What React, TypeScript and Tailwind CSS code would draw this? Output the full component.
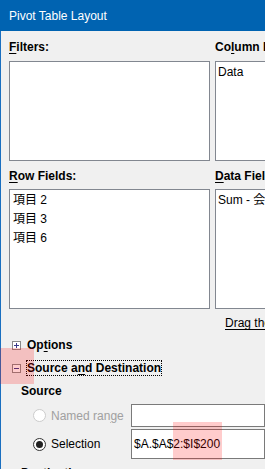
import React from "react";

const font = { fontFamily: '"Liberation Sans", "Noto Sans CJK JP", sans-serif' };

function Label({ children }: { children: React.ReactNode }) {
  return <div className="h-[20px] leading-[20px] text-[12px] font-bold text-black whitespace-nowrap">{children}</div>;
}

export default function App() {
  return (
    <div className="relative w-[265px] h-[469px] overflow-hidden bg-[#f0f0f0] text-[12px] text-black" style={font}>
      <div className="h-[31px] bg-[#0063b1] text-white flex items-center pl-[9px] text-[12px] leading-none">
        Pivot Table Layout
      </div>
      <div className="border-l border-[#1a6fc0] h-[438px] pl-[8px]">
        <div className="grid grid-cols-[201px_200px] gap-x-[5px] pt-[6px]">
          <div>
            <Label>
              <span className="underline underline-offset-2">F</span>ilters:
            </Label>
            <div className="mt-[4px] h-[100px] bg-white border border-[#828790]" />
          </div>
          <div>
            <Label>
              Co<span className="underline underline-offset-2">l</span>umn Fields:
            </Label>
            <div className="mt-[4px] h-[100px] bg-white border border-[#828790] pl-[2px] leading-[20px]">Data</div>
          </div>
          <div className="mt-[5px]">
            <Label>
              <span className="underline underline-offset-2">R</span>ow Fields:
            </Label>
            <div className="mt-[3px] h-[120px] bg-white border border-[#828790] pl-[3px] pt-[1px] leading-[19px]">
              <div>項目 2</div>
              <div>項目 3</div>
              <div>項目 6</div>
            </div>
          </div>
          <div className="mt-[5px]">
            <Label>
              <span className="underline underline-offset-2">D</span>ata Fields:
            </Label>
            <div className="mt-[3px] h-[120px] bg-white border border-[#828790] pl-[2px] pt-[1px] leading-[19px] whitespace-nowrap">
              Sum - 会計
            </div>
          </div>
          <div />
          <div className="mt-[5px] pl-[10px] h-[18px] leading-[18px] underline underline-offset-2 whitespace-nowrap">
            Drag the Items into the desired position
          </div>
        </div>

        <div className="mt-[4px] pl-[3px] flex flex-col gap-[5px]">
          <div className="flex items-center h-[18px]">
            <div className="w-[9px] h-[9px] border border-[#8a8a8a] bg-white flex items-center justify-center relative">
              <div className="absolute w-[5px] h-[1px] bg-[#3a3a8a]" />
              <div className="absolute w-[1px] h-[5px] bg-[#3a3a8a]" />
            </div>
            <span className="ml-[6px] font-bold text-[12px]">
              Op<span className="underline underline-offset-2">t</span>ions
            </span>
          </div>
          <div className="flex items-center h-[18px]">
            <div className="w-[9px] h-[9px] border border-[#8a8a8a] bg-white flex items-center justify-center relative">
              <div className="absolute w-[5px] h-[1px] bg-[#3a3a8a]" />
            </div>
            <span className="ml-[5px] font-bold text-[12px] border border-dotted border-black px-[0px] leading-[14px]">
              Source a<span className="underline underline-offset-2">n</span>d Destination
            </span>
          </div>
        </div>

        <div className="pl-[12px] mt-[4px]">
          <Label>Source</Label>
          <div className="flex items-center mt-[3px] h-[23px]">
            <div className="w-[13px] h-[13px] rounded-full border border-[#cccccc] bg-white ml-[12px]" />
            <span className="ml-[5px] w-[80px] text-[#a0a0a0] whitespace-nowrap">
              Named ran<span className="underline underline-offset-2">g</span>e
            </span>
            <div className="h-[23px] flex-1 bg-white border border-[#7a7a7a]" />
          </div>
          <div className="flex items-center mt-[2px] h-[30px]">
            <div className="w-[13px] h-[13px] rounded-full border border-[#333333] bg-white ml-[12px] flex items-center justify-center">
              <div className="w-[7px] h-[7px] rounded-full bg-[#222222]" />
            </div>
            <span className="ml-[5px] w-[80px] whitespace-nowrap">Selection</span>
            <div className="h-[30px] flex-1 bg-white border border-[#7a7a7a] flex items-center pl-[2px] whitespace-nowrap">
              $A.$A$2:$I$200
            </div>
          </div>
          <div className="mt-[4px]">
            <Label>Destination</Label>
          </div>
        </div>
      </div>

      <div className="absolute left-0 top-[348px] w-[34px] h-[36px] bg-[rgba(255,0,0,0.2)]" />
      <div className="absolute left-[173px] top-[422px] w-[49px] h-[38px] bg-[rgba(255,0,0,0.2)]" />
    </div>
  );
}
